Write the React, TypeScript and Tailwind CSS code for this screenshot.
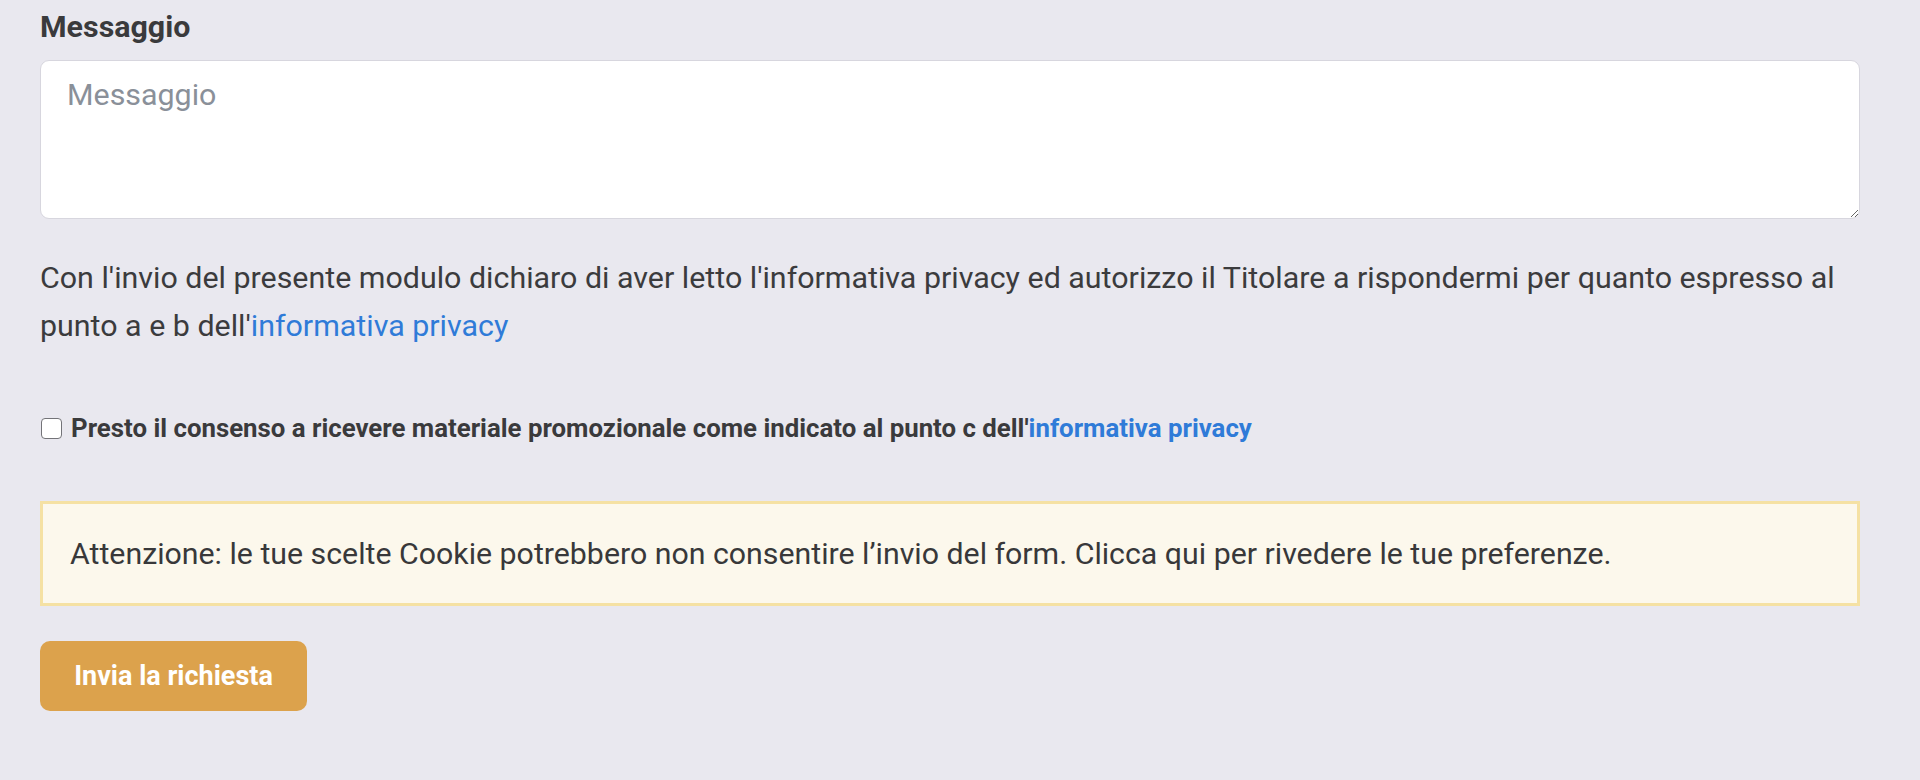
export default function App() {
  return (
    <div
      className="min-h-[780px] w-full bg-[#e9e8ef] pl-[40px] pr-[60px] pt-[9px] text-[#3b3b3d]"
      style={{ fontFamily: "Roboto, 'Liberation Sans', sans-serif" }}
    >
      {/* Messaggio */}
      <label className="block text-[30.4px] font-bold leading-[36px] text-[#3a3a3c]">
        Messaggio
      </label>
      <textarea
        placeholder="Messaggio"
        className="mt-[15px] block h-[159px] w-full rounded-[9px] border border-[#d7d6de] bg-white px-[26px] py-[11px] text-[30.4px] leading-[45px] text-[#3b3b3d] outline-none placeholder:text-[#8a9099]"
      />

      {/* Privacy */}
      <p className="mt-[35px] text-[30.4px] leading-[48px]">
        Con l'invio del presente modulo dichiaro di aver letto l'informativa privacy ed
        autorizzo il Titolare a rispondermi per quanto espresso al punto a e b dell'
        <a href="#" className="text-[#2f7bd8]">
          informativa privacy
        </a>
      </p>

      <label className="mt-[58px] flex items-center gap-[9px] text-[25.8px] font-bold leading-[40px] text-[#3a3a3c]">
        <input
          type="checkbox"
          className="ml-px h-[21px] w-[21px] shrink-0 appearance-none rounded-[4px] border-[1.5px] border-[#737378] bg-white"
        />
        <span>
          Presto il consenso a ricevere materiale promozionale come indicato al punto c dell'
          <a href="#" className="text-[#2f7bd8]">
            informativa privacy
          </a>
        </span>
      </label>

      {/* Avviso cookie */}
      <div className="mt-[53px] flex h-[105px] items-center border-[3px] border-[#f5e1a3] bg-[#fcf8ec] px-[27px] text-[30.3px] leading-[40px] text-[#38383a]">
        Attenzione: le tue scelte Cookie potrebbero non consentire l’invio del form. Clicca
        qui per rivedere le tue preferenze.
      </div>

      <button className="mt-[35px] h-[70px] w-[267px] rounded-[10px] bg-[#dca24c] text-[27px] font-bold text-white">
        Invia la richiesta
      </button>
    </div>
  );
}
